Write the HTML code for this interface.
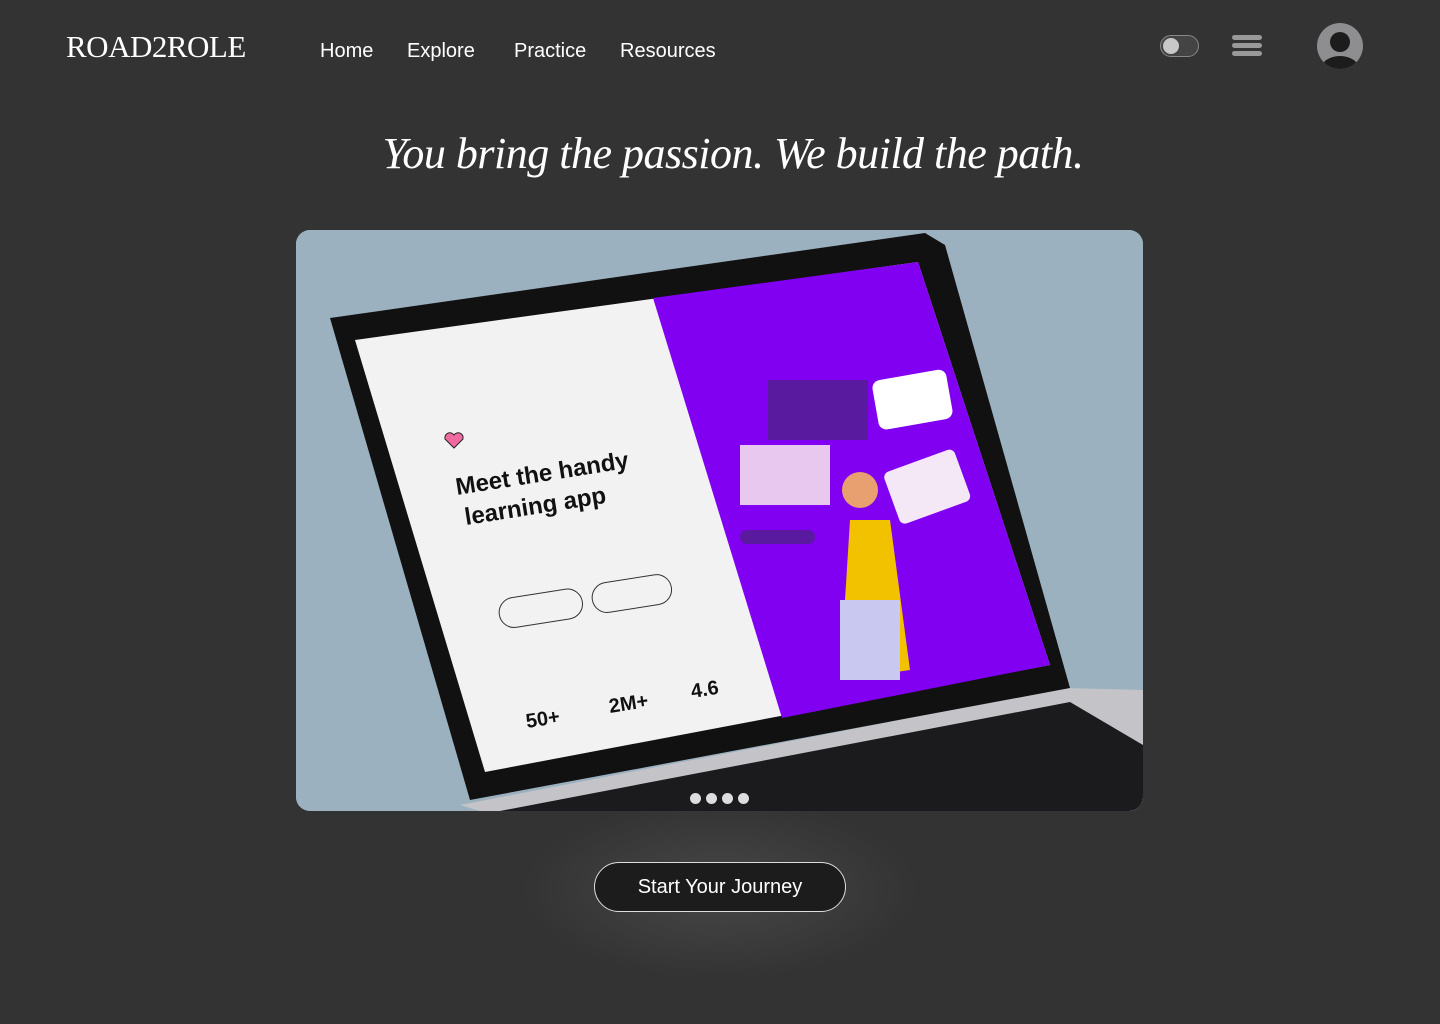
<!DOCTYPE html>
<html><head><meta charset="utf-8"><style>
body{margin:0;width:1440px;height:1024px;background:#333;font-family:"Liberation Sans",sans-serif;overflow:hidden;position:relative;color:#fff}
.logo{position:absolute;left:66px;top:29px;font-family:"Liberation Serif",serif;font-size:31px;letter-spacing:-0.5px}
.nav a{position:absolute;top:40px;font-size:20px;color:#fff;text-decoration:none}
h1{position:absolute;left:0;width:1466px;top:128px;margin:0;text-align:center;font-family:"Liberation Serif",serif;font-style:italic;font-weight:normal;font-size:44px;letter-spacing:-0.5px}
.hero{position:absolute;left:296px;top:230px;width:847px;height:581px;border-radius:14px;overflow:hidden;background:#9bb1bf}
.glow{position:absolute;left:520px;top:800px;width:400px;height:180px;background:radial-gradient(ellipse at center,rgba(80,80,80,.7),rgba(51,51,51,0) 70%)}
.btn{position:absolute;left:594px;top:862px;width:250px;height:48px;border:1.5px solid #ddd;border-radius:25px;background:#1c1c1c;text-align:center;line-height:48px;font-size:20px}
</style></head><body>
<div class="logo">ROAD2ROLE</div>
<div class="nav"><a style="left:320px">Home</a><a style="left:407px">Explore</a><a style="left:514px">Practice</a><a style="left:620px">Resources</a></div>
<div style="position:absolute;left:1160px;top:35px;width:37px;height:20px;border:1.5px solid #888;border-radius:11px;background:#444"><div style="position:absolute;left:2px;top:2px;width:16px;height:16px;border-radius:50%;background:#c8c8c8"></div></div>
<div style="position:absolute;left:1232px;top:35px;width:30px;height:5px;border-radius:3px;background:#999;box-shadow:0 8px 0 #999,0 16px 0 #999"></div>
<svg style="position:absolute;left:1317px;top:23px" width="46" height="46" viewBox="0 0 46 46"><defs><clipPath id="c"><circle cx="23" cy="23" r="23"/></clipPath></defs><circle cx="23" cy="23" r="23" fill="#8e8e90"/><g clip-path="url(#c)"><circle cx="23" cy="19" r="10" fill="#1c1c1c"/><ellipse cx="23" cy="46" rx="19" ry="13" fill="#1c1c1c"/></g></svg>
<h1>You bring the passion. We build the path.</h1>
<div class="glow"></div>
<div class="hero">
<svg width="847" height="581" viewBox="296 230 847 581">
<rect x="296" y="230" width="847" height="581" fill="#9bb1bf"/>
<polygon points="460,805 1065,688 1143,690 1143,811 480,811" fill="#c4c4c8"/>
<polygon points="500,811 1070,702 1143,745 1143,811" fill="#1b1b1d"/>
<polygon points="330,318 925,233 945,245 1070,688 470,800" fill="#111"/>
<polygon points="355,340 918,262 1050,665 485,772" fill="#f2f2f2"/>
<polygon points="653,298 918,262 1050,665 782,718" fill="#8200f2"/>
<text transform="translate(457,495) rotate(-9)" font-family="Liberation Sans" font-weight="bold" font-size="24" fill="#111">Meet the handy</text>
<text transform="translate(466,525) rotate(-9)" font-family="Liberation Sans" font-weight="bold" font-size="24" fill="#111">learning app</text>
<text transform="translate(527,728) rotate(-9)" font-family="Liberation Sans" font-weight="bold" font-size="20" fill="#111">50+</text>
<text transform="translate(610,713) rotate(-9)" font-family="Liberation Sans" font-weight="bold" font-size="20" fill="#111">2M+</text>
<text transform="translate(692,698) rotate(-9)" font-family="Liberation Sans" font-weight="bold" font-size="20" fill="#111">4.6</text>
<rect width="84" height="30" rx="15" transform="translate(497,600) rotate(-9)" fill="none" stroke="#333"/>
<rect width="80" height="30" rx="15" transform="translate(590,585) rotate(-9)" fill="none" stroke="#333"/>
<path d="M454 448 l-9-9 a5 5 0 0 1 9-4 a5 5 0 0 1 9 4z" fill="#f06aa0" stroke="#222"/>
<rect x="768" y="380" width="100" height="60" fill="#5a1aa0"/>
<rect x="875" y="375" width="75" height="50" rx="8" fill="#fff" transform="rotate(-10 910 400)"/>
<rect x="740" y="445" width="90" height="60" fill="#e8c8ee"/>
<rect x="890" y="460" width="75" height="55" rx="6" fill="#f4e8f6" transform="rotate(-20 925 488)"/>
<path d="M850 520 l40 0 l20 150 l-70 10z" fill="#f2c200"/>
<rect x="840" y="600" width="60" height="80" fill="#c8c8f0"/>
<circle cx="860" cy="490" r="18" fill="#e8a070"/>
<rect x="740" y="530" width="75" height="14" rx="7" fill="#5a1aa0"/>
</svg>
<div style="position:absolute;left:394px;top:563px;display:flex;gap:5px"><i style="width:11px;height:11px;border-radius:50%;background:#ddd"></i><i style="width:11px;height:11px;border-radius:50%;background:#ddd"></i><i style="width:11px;height:11px;border-radius:50%;background:#ddd"></i><i style="width:11px;height:11px;border-radius:50%;background:#ddd"></i></div>
</div>
<div class="btn">Start Your Journey</div>
</body></html>
